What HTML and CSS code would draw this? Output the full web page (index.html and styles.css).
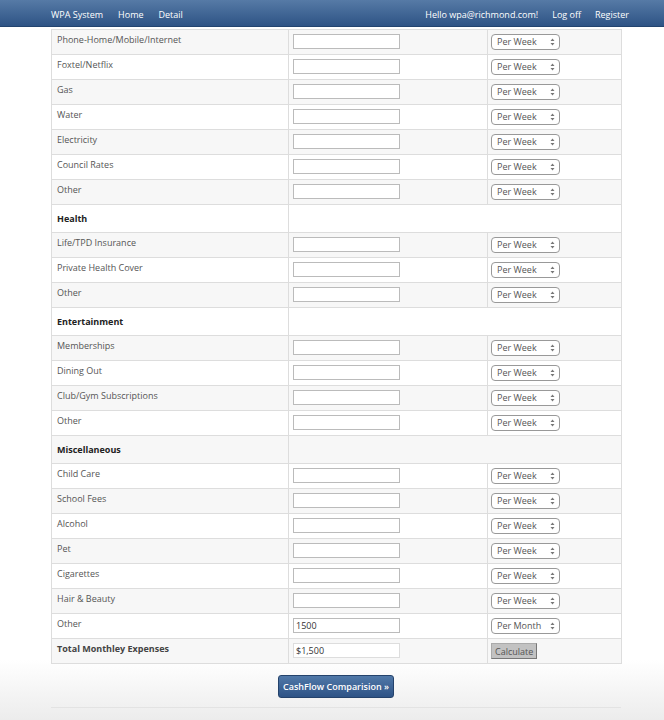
FILE: index.html
```html
<!DOCTYPE html>
<html>
<head>
<meta charset="utf-8">
<link rel="stylesheet" href="styles.css">
</head>
<body>
<div class="navbar">
  <div class="nav-inner">
    <div class="nav-left">
      <a class="brand">WPA System</a>
      <a>Home</a>
      <a>Detail</a>
    </div>
    <div class="nav-right">
      <a>Hello wpa@richmond.com!</a>
      <a>Log off</a>
      <a>Register</a>
    </div>
  </div>
</div>
<div class="container">
  <table class="grid">
    <colgroup><col class="c1"><col class="c2"><col class="c3"></colgroup>
    <tbody id="rows"></tbody>
  </table>
  <div class="actions">
    <button class="btn-primary">CashFlow Comparision &raquo;</button>
  </div>
  <hr class="rule">
</div>
<script src="app.js"></script>
</body>
</html>
```

FILE: app.js
```javascript
const rows = [
  ["r","Phone-Home/Mobile/Internet"],["r","Foxtel/Netflix"],["r","Gas"],["r","Water"],["r","Electricity"],["r","Council Rates"],["r","Other"],
  ["h","Health"],["r","Life/TPD Insurance"],["r","Private Health Cover"],["r","Other"],
  ["h","Entertainment"],["r","Memberships"],["r","Dining Out"],["r","Club/Gym Subscriptions"],["r","Other"],
  ["h","Miscellaneous"],["r","Child Care"],["r","School Fees"],["r","Alcohol"],["r","Pet"],["r","Cigarettes"],["r","Hair & Beauty"],
  ["r","Other","1500","Per Month"],["t","Total Monthley Expenses"]
];
const arrows = '<svg class="arr" width="5" height="8" viewBox="0 0 5 8"><path d="M2.5 0.5L4.5 3H0.5Z M2.5 7.5L0.5 5H4.5Z" fill="#777"/></svg>';
const tb = document.getElementById('rows');
let html = '';
rows.forEach((r, i) => {
  const stripe = i % 2 === 0 ? ' odd' : '';
  if (r[0] === 'h') {
    html += `<tr class="head${stripe}"><td>${r[1]}</td><td colspan="2"></td></tr>`;
  } else if (r[0] === 't') {
    html += `<tr class="total${stripe}"><td>${r[1]}</td><td><input class="txt light" value="$1,500"></td><td><button class="calc">Calculate</button></td></tr>`;
  } else {
    html += `<tr class="${stripe}"><td>${r[1].replace('&','&amp;')}</td><td><input class="txt" value="${r[2]||''}"></td><td><span class="sel"><select><option>${r[3]||'Per Week'}</option></select>${arrows}</span></td></tr>`;
  }
});
tb.innerHTML = html;
```

FILE: styles.css
```css
html { background: #fff; }
body {
  margin: 0;
  font-family: "Open Sans", "Liberation Sans", sans-serif;
  font-size: 9px;
  color: #555;
  min-height: 720px;
  background: linear-gradient(to bottom, #fff 0, #fff 660px, #ececec 720px);
}
.navbar {
  height: 27px;
  background: linear-gradient(to bottom, #567aa6 0%, #2e5385 100%);
  border-bottom: 1px solid #23446f;
  box-sizing: border-box;
  padding-top: 3px;
}
.nav-inner {
  margin-left: 51px;
  width: 578px;
  height: 100%;
  display: flex;
  justify-content: space-between;
  align-items: center;
}
.nav-left, .nav-right { display: flex; gap: 15px; align-items: center; }
.nav-right { gap: 14px; }
.navbar a { color: #fff; font-size: 9px; text-decoration: none; line-height: 12px; }
.container {
  margin-left: 51px;
  width: 570px;
  padding-top: 2px;
}
.grid {
  width: 570px;
  border-collapse: collapse;
  table-layout: fixed;
}
col.c1 { width: 237px; }
col.c2 { width: 199px; }
col.c3 { width: 134px; }
.grid td {
  border: 1px solid #ddd;
  padding: 4px 4px 4px 5px;
  height: 16px;
  line-height: 12px;
  vertical-align: top;
  box-sizing: content-box;
}
.grid td + td { padding-left: 4px; }
.grid td + td + td { padding-left: 3px; }
.grid tr { height: 25px; }
.grid tr.odd td { background: #f7f7f7; }
.grid tr.head { height: 28px; }
.grid tr.head td {
  height: 19px;
  padding-top: 8px;
  padding-bottom: 0;
  font-weight: bold;
  color: #222;
}
.grid tr.total td:first-child { font-weight: bold; color: #444; }
.txt {
  display: block;
  box-sizing: border-box;
  width: 107px;
  height: 15px;
  margin: 0;
  padding: 0 2px;
  border: 1px solid #bbb;
  font-family: "Open Sans", "Liberation Sans", sans-serif;
  font-size: 9px;
  color: #333;
  background: #fff;
}
.txt.light { border-color: #ddd; }
.sel { position: relative; display: block; width: 69px; height: 16px; }
.sel select {
  display: block;
  -webkit-appearance: none;
  appearance: none;
  width: 69px;
  height: 16px;
  margin: 0;
  box-sizing: border-box;
  border: 1px solid #999;
  border-radius: 4px;
  background: #fff;
  padding: 0 0 0 5px;
  font-family: "Open Sans", "Liberation Sans", sans-serif;
  font-size: 9px;
  color: #555;
  line-height: 14px;
}
.sel .arr { position: absolute; right: 5px; top: 4px; }
.calc {
  display: block;
  margin: 0;
  height: 16px;
  padding: 0 3px;
  background: #c2c2c2;
  border: 1px solid #aaa;
  border-right-color: #777;
  border-bottom-color: #777;
  font-family: "Open Sans", "Liberation Sans", sans-serif;
  font-size: 9px;
  color: #555;
}
.actions { display: flex; justify-content: center; margin-top: 11px; }
.btn-primary {
  width: 116px;
  height: 23px;
  border: 1px solid #24426b;
  border-radius: 3px;
  background: linear-gradient(to bottom, #5078a8 0%, #2e5386 100%);
  color: #fff;
  font-family: "Open Sans", "Liberation Sans", sans-serif;
  font-size: 9px;
  font-weight: 600;
  padding: 0;
  white-space: nowrap;
}
.rule {
  margin: 9px 0 0 0;
  border: 0;
  border-top: 1px solid #e3e3e3;
}
```
